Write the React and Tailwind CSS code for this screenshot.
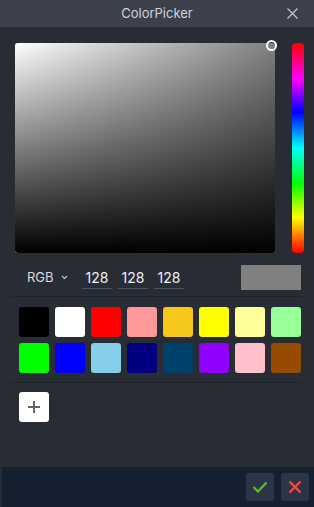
import React from "react";

const swatches = [
  "bg-[#000000]", "bg-[#ffffff]", "bg-[#ff0000]", "bg-[#ff9999]",
  "bg-[#f5c71a]", "bg-[#ffff00]", "bg-[#ffff99]", "bg-[#99ff99]",
  "bg-[#00ff00]", "bg-[#0000ff]", "bg-[#87ceeb]", "bg-[#000080]",
  "bg-[#00416a]", "bg-[#8f00ff]", "bg-[#ffc0cb]", "bg-[#964b00]",
];

export default function App() {
  return (
    <div className="w-[314px] h-[507px] flex flex-col bg-[#282c35] overflow-hidden" style={{ fontFamily: "Inter, 'Noto Sans', sans-serif" }}>
      {/* title bar */}
      <div className="relative h-[27px] shrink-0 bg-[#3c404b] flex items-center justify-center">
        <span className="text-[13px] text-[#cfd3db]">ColorPicker</span>
        <svg className="absolute right-[16px] top-[8px]" width="11" height="11" viewBox="0 0 11 11">
          <path d="M0.5 0.5 L10.5 10.5 M10.5 0.5 L0.5 10.5" stroke="#c5c8cf" strokeWidth="1.2" />
        </svg>
      </div>

      {/* picker */}
      <div className="flex pt-[16px] pl-[15px] gap-[17px]">
        <div className="relative w-[260px] h-[210px] rounded-[3px] bg-[#808080] overflow-visible">
          <div className="absolute inset-0 rounded-[3px] bg-gradient-to-r from-white to-transparent" />
          <div className="absolute inset-0 rounded-[3px] bg-gradient-to-t from-black to-transparent" />
          <div className="absolute right-[-2px] top-[-3px] w-[11px] h-[11px] rounded-full border-2 border-white" />
        </div>
        <div
          className="w-[12px] h-[210px] rounded-[4px]"
          style={{ background: "linear-gradient(to bottom, #ff0000 0%, #ff00ff 17%, #0000ff 33%, #00ffff 50%, #00ff00 67%, #ffff00 83%, #ff0000 100%)" }}
        />
      </div>

      {/* inputs row */}
      <div className="mx-[11px] mt-[12px] flex items-center pl-[16px] pr-[2px] pb-[6px] border-b border-[#1f232a]">
        <div className="flex items-center gap-[7px] text-[13px] text-[#d8dbe0] w-[55px]">
          <span>RGB</span>
          <svg width="7" height="5" viewBox="0 0 7 5"><path d="M1 1 L3.5 3.5 L6 1" stroke="#c5c8cf" strokeWidth="1.1" fill="none" /></svg>
        </div>
        <div className="flex gap-[6px]">
          {[0, 1, 2].map((i) => (
            <div key={i} className="w-[30px] h-[23px] border-b border-[#4b5262] text-[14px] text-[#eef0f3] flex items-center justify-center">128</div>
          ))}
        </div>
        <div className="ml-auto w-[60px] h-[25px] bg-[#808080]" />
      </div>

      {/* swatches */}
      <div className="mx-[11px] border-b border-[#1f232a] pt-[10px] pb-[9px] pl-[8px]">
        <div className="grid grid-cols-[repeat(8,30px)] gap-[6px]">
          {swatches.map((c, i) => (
            <div key={i} className={`w-[30px] h-[30px] rounded-[3px] ${c}`} />
          ))}
        </div>
      </div>

      {/* add */}
      <div className="pl-[19px] pt-[9px]">
        <div className="w-[30px] h-[30px] rounded-[3px] bg-white flex items-center justify-center">
          <svg width="14" height="14" viewBox="0 0 14 14"><path d="M7 1 V13 M1 7 H13" stroke="#666" strokeWidth="2" /></svg>
        </div>
      </div>

      {/* footer */}
      <div className="mt-auto ml-[2px] h-[40px] bg-[#152030] flex items-center justify-end gap-[7px] pr-[5px]">
        <div className="w-[28px] h-[28px] rounded-[3px] bg-[#2c3547] flex items-center justify-center">
          <svg width="16" height="12" viewBox="0 0 16 12"><path d="M1.5 6 L6 10.5 L14.5 1.5" stroke="#52c41a" strokeWidth="2.2" fill="none" /></svg>
        </div>
        <div className="w-[28px] h-[28px] rounded-[3px] bg-[#2c3547] flex items-center justify-center">
          <svg width="14" height="14" viewBox="0 0 14 14"><path d="M1.5 1.5 L12.5 12.5 M12.5 1.5 L1.5 12.5" stroke="#ff4d2e" strokeWidth="2.2" /></svg>
        </div>
      </div>
    </div>
  );
}
